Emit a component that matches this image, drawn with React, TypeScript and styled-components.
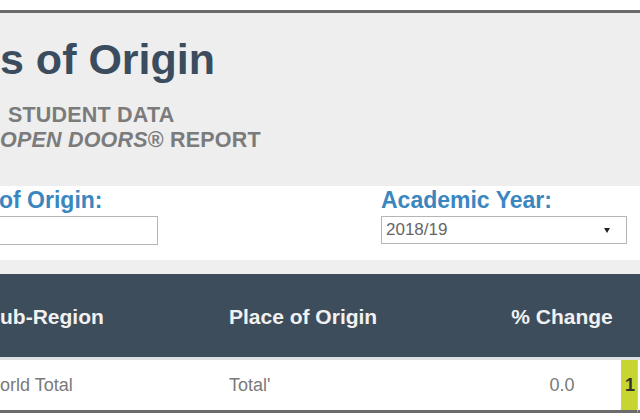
import React from "react";
import styled, { createGlobalStyle } from "styled-components";

const GlobalStyle = createGlobalStyle`
  html, body {
    margin: 0;
    padding: 0;
    background: #ffffff;
    font-family: "Liberation Sans", Arial, sans-serif;
    overflow: hidden;
  }
`;

const Page = styled.div`
  width: 640px;
  height: 420px;
  padding-top: 10px;
  box-sizing: border-box;
  overflow: hidden;
  background: #ffffff;
`;

const Masthead = styled.header`
  height: 176px;
  box-sizing: border-box;
  border-top: 3px solid #6b6b6b;
  background: #eeeeee;
  padding: 21px 0 0 0;
`;

const Title = styled.h1`
  margin: 0;
  font-size: 43px;
  line-height: 50px;
  font-weight: 700;
  color: #3b4c5e;
  white-space: nowrap;
`;

const Subtitle = styled.p`
  margin: 19px 0 0 8px;
  font-size: 21.5px;
  line-height: 25px;
  font-weight: 700;
  letter-spacing: 0.2px;
  color: #7b7b7b;
  white-space: nowrap;

  span {
    display: block;
  }

  span + span {
    margin-left: -8px;
  }

  em {
    font-style: italic;
  }
`;

const Filters = styled.section`
  height: 88px;
  box-sizing: border-box;
  background: #ffffff;
  border-bottom: 14px solid #efefef;
  display: flex;
  align-items: flex-start;
  padding-top: 1px;
`;

const Field = styled.div<{ $offset: number }>`
  display: flex;
  flex-direction: column;
  gap: 3px;
  margin-left: ${({ $offset }) => $offset}px;
`;

const Label = styled.label`
  font-size: 23px;
  line-height: 26px;
  font-weight: 700;
  color: #3a87bf;
  white-space: nowrap;
`;

const TextBox = styled.div`
  width: 162px;
  height: 29px;
  box-sizing: border-box;
  margin-left: -3px;
  border: 1px solid #b5b5b5;
  background: #ffffff;
`;

const Select = styled.div`
  width: 246px;
  height: 28px;
  box-sizing: border-box;
  border: 1px solid #b5b5b5;
  background: #ffffff;
  display: flex;
  align-items: center;
  justify-content: space-between;
  padding: 0 16px 0 4px;
  font-size: 17px;
  color: #666666;
`;

const Caret = styled.span`
  width: 0;
  height: 0;
  border-left: 3.5px solid transparent;
  border-right: 3.5px solid transparent;
  border-top: 5px solid #222222;
`;

const Table = styled.div`
  display: grid;
  grid-template-columns: 229px 274px 118px 16px 3px;
`;

const HeadCell = styled.div<{ $align?: string }>`
  height: 86px;
  box-sizing: border-box;
  background: #3e4d5c;
  border-bottom: 3px solid #dde1e4;
  display: flex;
  align-items: center;
  justify-content: ${({ $align }) => $align || "flex-start"};
  font-size: 21px;
  font-weight: 700;
  color: #f1f1f1;
  white-space: nowrap;
  padding-top: 2px;
`;

const Cell = styled.div<{ $align?: string; $fill?: string }>`
  height: 53px;
  box-sizing: border-box;
  border-bottom: 3px solid #6b6b6b;
  background: ${({ $fill }) => $fill || "#ffffff"};
  display: flex;
  align-items: center;
  justify-content: ${({ $align }) => $align || "flex-start"};
  font-size: 18px;
  color: #7a7a7a;
  white-space: nowrap;
  overflow: hidden;
`;

const Rank = styled.span`
  font-weight: 700;
  color: #333333;
  padding-left: 4px;
`;

const Edge = styled.div`
  border-left: 1px solid #c9c9c9;
`;

export default function App() {
  return (
    <Page>
      <GlobalStyle />
      <Masthead>
        <Title>s of Origin</Title>
        <Subtitle>
          <span>STUDENT DATA</span>
          <span>
            <em>OPEN DOORS</em>® REPORT
          </span>
        </Subtitle>
      </Masthead>
      <Filters>
        <Field $offset={-1}>
          <Label>of Origin:</Label>
          <TextBox />
        </Field>
        <Field $offset={223}>
          <Label>Academic Year:</Label>
          <Select>
            <span>2018/19</span>
            <Caret />
          </Select>
        </Field>
      </Filters>
      <Table>
        <HeadCell>ub-Region</HeadCell>
        <HeadCell>Place of Origin</HeadCell>
        <HeadCell $align="center">% Change</HeadCell>
        <HeadCell />
        <HeadCell />
        <Cell>orld Total</Cell>
        <Cell>Total'</Cell>
        <Cell $align="center">0.0</Cell>
        <Cell $fill="#c6d530">
          <Rank>1</Rank>
        </Cell>
        <Cell as={Edge} />
      </Table>
    </Page>
  );
}
